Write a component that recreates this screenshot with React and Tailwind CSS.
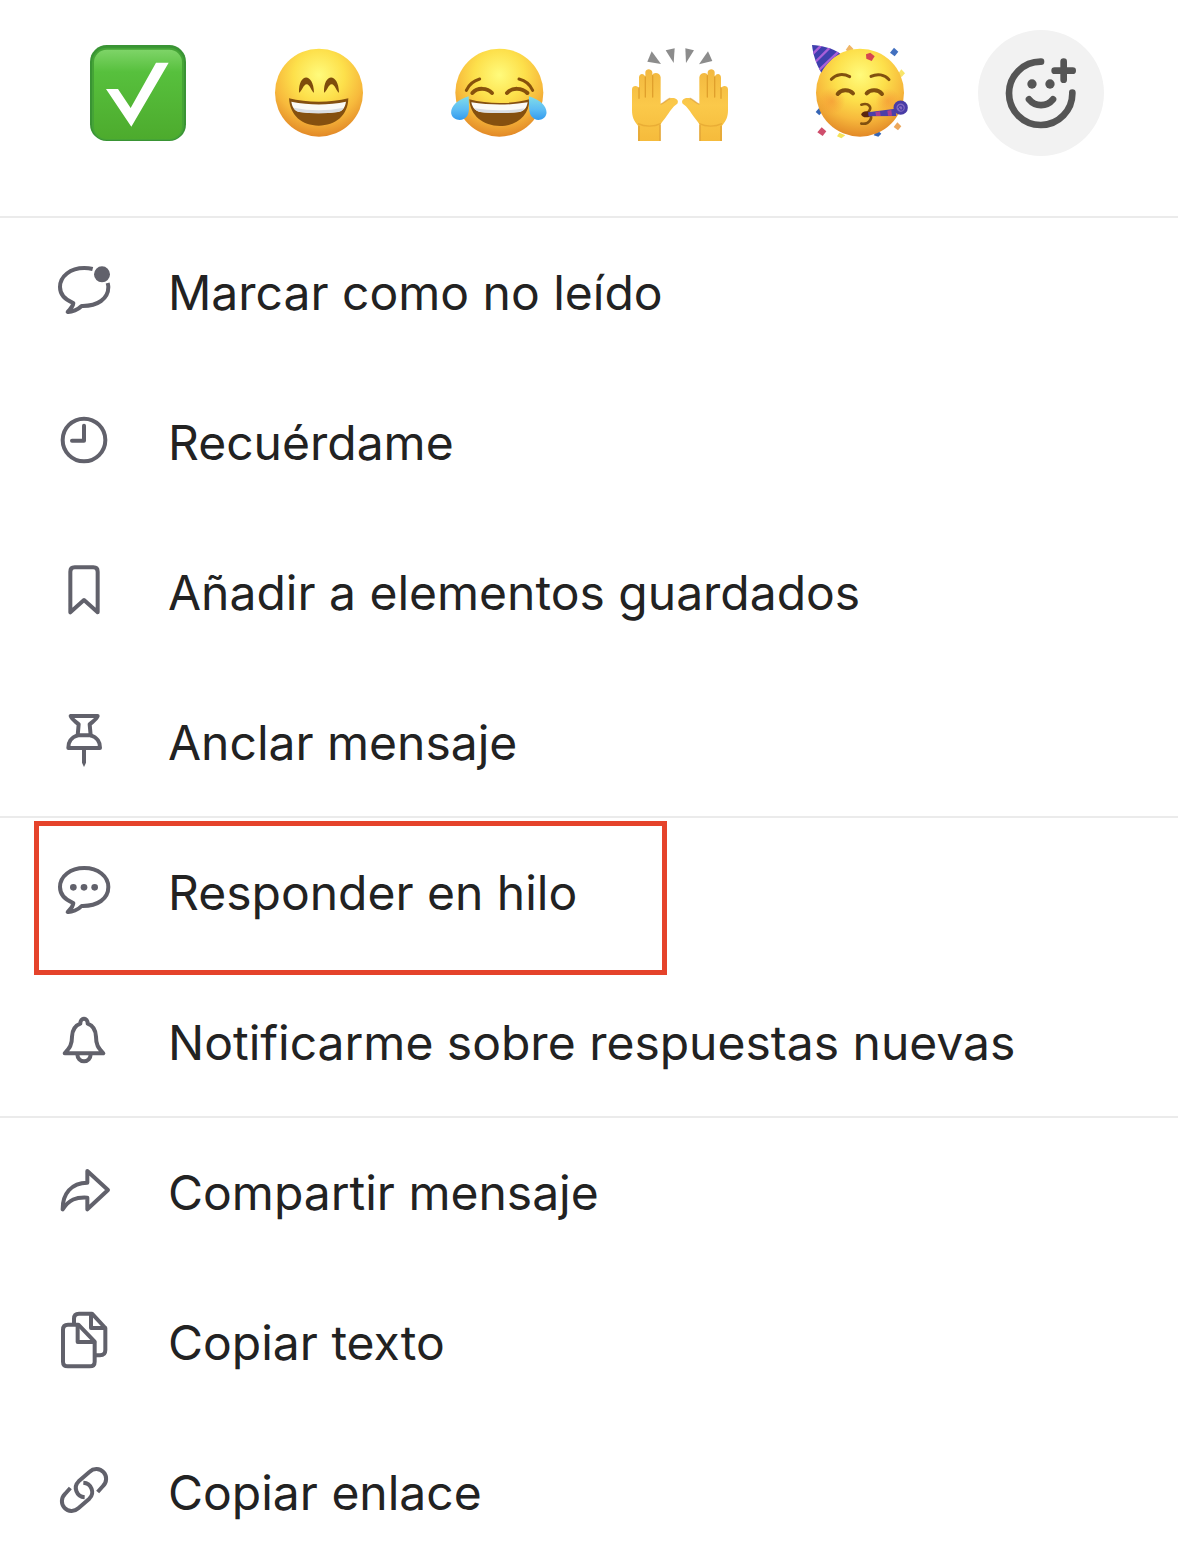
import clsx from 'clsx'

function FaceGradient({ id }) {
  return (
    <radialGradient id={id} cx="0.5" cy="0.3" r="0.72">
      <stop offset="0" stopColor="#fffb7c" />
      <stop offset="0.4" stopColor="#fde04b" />
      <stop offset="0.7" stopColor="#f7b93c" />
      <stop offset="1" stopColor="#e08425" />
    </radialGradient>
  )
}

function CheckEmoji() {
  return (
    <svg viewBox="30 30 288 288" className="size-24" aria-hidden="true">
      <defs>
        <linearGradient id="check-bg" x1="0" y1="0" x2="0" y2="1">
          <stop offset="0" stopColor="#7ed468" />
          <stop offset="0.25" stopColor="#57c03d" />
          <stop offset="1" stopColor="#4dab2d" />
        </linearGradient>
      </defs>
      <rect x="30" y="30" width="288" height="288" rx="50" fill="#399434" />
      <rect x="36" y="38" width="276" height="277" rx="44" fill="#45a436" />
      <rect x="42" y="44" width="264" height="268" rx="38" fill="url(#check-bg)" />
      <path d="M78 162H114L152 219L228 83H266L154 275Z" fill="#fff" />
    </svg>
  )
}

function GrinEmoji() {
  return (
    <svg viewBox="573 30 288 288" className="size-24" aria-hidden="true">
      <defs>
        <FaceGradient id="grin-face" />
      </defs>
      <circle cx="717" cy="173" r="132" fill="url(#grin-face)" />
      <g fill="#7d4b0c">
        <path d="M657 173C655 112 701 112 702 173C694 170 690 148 680 148S666 170 657 173Z" />
        <path d="M732 173C730 112 776 112 777 173C769 170 765 148 755 148S741 170 732 173Z" />
      </g>
      <path d="M627 190C680 204 752 204 805 190C804 242 766 272 716 272S630 242 627 190Z" fill="#85500f" />
      <path d="M634 200C690 211 744 211 798 200C795 219 787 228 774 231C736 236 696 236 658 231C645 228 637 219 634 200Z" fill="#fbfaf6" />
      <path d="M641 218C690 228 742 228 791 218C787 226 782 229 774 231C736 236 696 236 658 231C650 229 645 226 641 218Z" fill="#d9dde2" />
    </svg>
  )
}

function JoyEmoji() {
  return (
    <svg viewBox="33 30 288 288" className="size-24" aria-hidden="true">
      <defs>
        <FaceGradient id="joy-face" />
        <linearGradient id="joy-tear" x1="0" y1="0" x2="0" y2="1">
          <stop offset="0" stopColor="#80dce8" />
          <stop offset="0.55" stopColor="#5dbdf4" />
          <stop offset="1" stopColor="#349bed" />
        </linearGradient>
      </defs>
      <circle cx="178" cy="173" r="132" fill="url(#joy-face)" />
      <g fill="none" stroke="#87510c" strokeLinecap="round">
        <path d="M79 166C87 148 102 137 119 132" strokeWidth="9" />
        <path d="M237 132C257 137 270 148 278 166" strokeWidth="9" />
        <path d="M97 174C112 157 142 158 156 174" strokeWidth="12" />
        <path d="M201 174C216 157 246 158 262 174" strokeWidth="12" />
      </g>
      <path d="M88 193C145 208 212 208 268 193C268 242 230 273 180 273S90 242 88 193Z" fill="#85500f" />
      <path d="M94 202C150 211 210 211 263 202C260 220 252 228 238 231C200 235 156 235 120 231C106 228 97 218 94 202Z" fill="#fbfaf6" />
      <path d="M102 220C154 228 206 228 254 220C250 227 246 229 238 231C200 235 156 235 120 231C112 229 106 226 102 220Z" fill="#d9dde2" />
      <path d="M86 184C48 196 30 218 34 237C38 256 68 262 81 244C90 231 86 207 86 184Z" fill="url(#joy-tear)" />
      <path d="M267 184C305 196 323 218 319 237C315 256 288 262 274 244C265 231 267 207 267 184Z" fill="url(#joy-tear)" />
    </svg>
  )
}

function Hand() {
  return (
    <g>
      <path
        d="M594 318V272C581 258 576 244 576 226V163C576 150 595 150 597 161V128C597 114 613 114 616 126V111C618 100 634 100 637 111V121C640 110 661 113 662 127V207C670 206 679 194 691 190C705 186 719 195 712 206C698 214 688 232 678 246C672 254 666 260 662 268V318Z"
        fill="url(#hand-skin)"
      />
      <path d="M597 158V190M616 126V186M638 122V186" fill="none" stroke="#e0a02c" strokeWidth="4" strokeLinecap="round" />
      <path d="M594 266C614 276 642 276 662 266" fill="none" stroke="#e3a431" strokeWidth="4" opacity="0.7" />
      <path d="M662 207C670 206 679 194 691 190M597 272V318M660 270V318" fill="none" stroke="#d99a35" strokeWidth="5" opacity="0.6" />
    </g>
  )
}

function HandsEmoji() {
  return (
    <svg viewBox="576 30 288 288" className="size-24" aria-hidden="true">
      <defs>
        <linearGradient id="hand-skin" x1="0" y1="0" x2="0" y2="1">
          <stop offset="0" stopColor="#f2b840" />
          <stop offset="0.5" stopColor="#fbc94a" />
          <stop offset="1" stopColor="#f5bb3c" />
        </linearGradient>
      </defs>
      <Hand />
      <g transform="translate(1440 0) scale(-1 1)">
        <Hand />
      </g>
      <g fill="#8c8c8c">
        <path d="M635 49L663 87L622 80Z" />
        <path d="M677 46L704 40L701 84Z" />
        <path d="M736 40L762 46L738 84Z" />
        <path d="M804 49L817 78L777 88Z" />
      </g>
    </svg>
  )
}

function PartyEmoji() {
  return (
    <svg viewBox="36 75 288 288" className="size-24" aria-hidden="true">
      <defs>
        <FaceGradient id="party-face" />
        <radialGradient id="party-cheek">
          <stop offset="0" stopColor="#f2762c" stopOpacity="0.4" />
          <stop offset="1" stopColor="#f2762c" stopOpacity="0" />
        </radialGradient>
        <clipPath id="party-hat">
          <path d="M36 75C64 77 98 84 121 101C98 112 77 132 64 158C48 132 39 102 36 75Z" />
        </clipPath>
      </defs>
      <path d="M58 263l10 11-10 12-11-10z" fill="#3565b5" />
      <path d="M232 331l12 10-9 9-14-4z" fill="#3565b5" />
      <path d="M118 338l18 8-12 9-13-6z" fill="#f5e45b" />
      <path d="M148 74l12 12-6 14-17-10z" fill="#efb667" />
      <path d="M304 148l11 12-10 11-11-10z" fill="#f8e56b" />
      <circle cx="180" cy="218" r="132" fill="url(#party-face)" />
      <circle cx="96" cy="243" r="40" fill="url(#party-cheek)" />
      <circle cx="264" cy="243" r="38" fill="url(#party-cheek)" />
      <g clipPath="url(#party-hat)">
        <rect x="36" y="75" width="90" height="90" fill="#3f3fae" />
        <path d="M36 104L66 74M40 132L96 76M52 155L122 89" stroke="#a95fd8" strokeWidth="7" />
      </g>
      <g fill="none" stroke="#81500f" strokeLinecap="round">
        <path d="M94 178C108 162 130 160 149 170" strokeWidth="9" />
        <path d="M213 169C232 160 254 163 267 179" strokeWidth="9" />
        <path d="M113 222C124 208 146 207 159 220" strokeWidth="12" />
        <path d="M200 220C212 207 235 208 246 222" strokeWidth="12" />
        <path d="M184 254C205 247 221 262 203 278C224 286 211 314 184 311" strokeWidth="8" />
      </g>
      <ellipse cx="199" cy="283" rx="15" ry="9" fill="#5b260f" />
      <path d="M204 277L286 266L289 288L206 289Z" fill="#4c3fa8" />
      <path d="M226 276l14-2 2 14h-14zM262 272l12-2 2 17h-12z" fill="#a93d91" />
      <circle cx="302" cy="263" r="17" fill="#846bc1" stroke="#493ca6" strokeWidth="9" />
      <path d="M295 264C295 254 309 254 309 265C307 273 298 271 298 264" fill="none" stroke="#493ca6" strokeWidth="4" />
      <path d="M211 98l13 11-9 14-16-7-1-13z" fill="#d64550" />
      <path d="M282 83l13 12-11 14-14-11z" fill="#4270bf" />
      <path d="M65 322l14 12-11 14-16-11z" fill="#cf4e6c" />
      <path d="M292 307l12 12-10 12-13-10z" fill="#eca75c" />
    </svg>
  )
}

function AddReactionIcon() {
  return (
    <svg
      viewBox="534 29 378 378"
      className="size-full"
      fill="none"
      stroke="#555"
      strokeWidth="20"
      strokeLinecap="round"
      aria-hidden="true"
    >
      <path d="M723 124A95 95 0 1 0 817 217" />
      <path d="M764 151H818M791 124V178" />
      <path d="M687 237C706 260 740 260 759 237" />
      <g fill="#555" stroke="none">
        <circle cx="696" cy="191" r="14" />
        <circle cx="750" cy="191" r="14" />
      </g>
    </svg>
  )
}

function Icon({ children, viewBox = '42 30 180 180' }) {
  return (
    <svg
      viewBox={viewBox}
      className="mb-1 size-[60px] shrink-0"
      fill="none"
      stroke="#61616b"
      strokeWidth="12"
      strokeLinecap="round"
      strokeLinejoin="round"
      aria-hidden="true"
    >
      {children}
    </svg>
  )
}

const unreadIcon = (
  <Icon>
    <path
      d="M158 57C150 55 142 54 133 54C91 54 60 79 60 111C60 133 77 150 100 159C99 172 89 178 83 186C95 187 115 178 125 168C173 169 205 146 205 111C205 107 204 103 203 99"
      strokeLinecap="butt"
    />
    <circle cx="186" cy="73" r="24" fill="#61616b" stroke="none" />
  </Icon>
)

const clockIcon = (
  <Icon>
    <circle cx="132" cy="120" r="64" />
    <path d="M132 77V122H96" />
  </Icon>
)

const bookmarkIcon = (
  <Icon>
    <path d="M91 187V65Q91 52 104 52H160Q173 52 173 65V187L132 150Z" />
  </Icon>
)

const pinIcon = (
  <Icon>
    <path d="M92 48H173C170 58 159 64 149 73L152 106H113L116 73C106 64 95 58 92 48Z" />
    <path d="M113 106C93 112 84 128 85 144H180C181 128 172 112 152 106" />
    <path d="M126 146H138V188L132 201L126 188Z" fill="#61616b" stroke="none" />
  </Icon>
)

const threadIcon = (
  <Icon viewBox="87 150 180 180">
    <path d="M178 174C136 174 105 199 105 231C105 253 122 270 145 279C144 292 134 299 128 306C140 307 160 299 170 288C218 289 250 266 250 231C250 199 219 174 178 174Z" />
    <g fill="#61616b" stroke="none">
      <circle cx="145" cy="232" r="10" />
      <circle cx="177" cy="232" r="10" />
      <circle cx="209" cy="232" r="10" />
    </g>
  </Icon>
)

const bellIcon = (
  <Icon>
    <path d="M74 160C90 143 96 134 96 110C97 88 107 76 121 71C120 51 144 51 143 71C157 76 167 88 168 110C168 134 174 143 190 160Z" />
    <path d="M112 163A20 21 0 0 0 152 163" />
  </Icon>
)

const shareIcon = (
  <Icon>
    <path d="M142 63L204 120L142 178V143C108 141 88 148 68 178C67 132 94 98 142 98Z" />
  </Icon>
)

const copyIcon = (
  <Icon>
    <path d="M115 74H84Q69 74 69 89V185Q69 199 84 199H149Q164 199 164 185V125Z" />
    <path d="M113 75V126H163" />
    <path d="M102 72V56Q102 41 117 41H156L196 84V150Q196 166 180 166H168" />
    <path d="M153 43V84H195" />
  </Icon>
)

const linkIcon = (
  <Icon>
    <path d="M173 126L189 108A29 29 0 0 0 149 65L116 94A28 28 0 0 0 134 142" strokeLinecap="butt" />
    <path d="M91 114L75 132A29 29 0 0 0 115 175L148 146A28 28 0 0 0 130 98" strokeLinecap="butt" />
  </Icon>
)

const reactions = [
  { label: 'Hecho', art: <CheckEmoji /> },
  { label: 'Sonrisa', art: <GrinEmoji /> },
  { label: 'Risa', art: <JoyEmoji /> },
  { label: 'Manos arriba', art: <HandsEmoji /> },
  { label: 'Fiesta', art: <PartyEmoji /> },
]

const groups = [
  [
    { label: 'Marcar como no leído', icon: unreadIcon },
    { label: 'Recuérdame', icon: clockIcon },
    { label: 'Añadir a elementos guardados', icon: bookmarkIcon },
    { label: 'Anclar mensaje', icon: pinIcon },
  ],
  [
    { label: 'Responder en hilo', icon: threadIcon, highlighted: true },
    { label: 'Notificarme sobre respuestas nuevas', icon: bellIcon },
  ],
  [
    { label: 'Compartir mensaje', icon: shareIcon },
    { label: 'Copiar texto', icon: copyIcon },
    { label: 'Copiar enlace', icon: linkIcon },
  ],
]

function MenuItem({ item, first }) {
  return (
    <li className={clsx('relative border-t-2', first ? 'border-[#ebebeb]' : 'border-transparent')}>
      <button type="button" className="flex h-[148px] w-full items-center gap-[54px] pl-[54px] text-left">
        {item.icon}
        <span className="pt-0.5 whitespace-nowrap">{item.label}</span>
      </button>
      {/* Callout frame */}
      {item.highlighted && (
        <div className="pointer-events-none absolute top-[3px] left-[34px] h-[154px] w-[633px] border-5 border-[#e5432b]" />
      )}
    </li>
  )
}

export default function App() {
  return (
    <main className="w-full overflow-hidden bg-white font-['Inter',sans-serif] text-5xl leading-[60px] text-[#222]">
      {/* Quick reactions */}
      <div className="flex justify-between pt-[30px] pr-[74px] pb-[60px] pl-[75px]">
        {reactions.map((r) => (
          <button key={r.label} type="button" aria-label={r.label} className="flex size-[126px] items-center justify-center">
            {r.art}
          </button>
        ))}
        <button type="button" aria-label="Añadir reacción" className="size-[126px] rounded-full bg-[#f2f2f2]">
          <AddReactionIcon />
        </button>
      </div>

      {/* Message actions */}
      {groups.map((group) => (
        <ul key={group[0].label}>
          {group.map((item, i) => (
            <MenuItem key={item.label} item={item} first={i === 0} />
          ))}
        </ul>
      ))}
    </main>
  )
}
